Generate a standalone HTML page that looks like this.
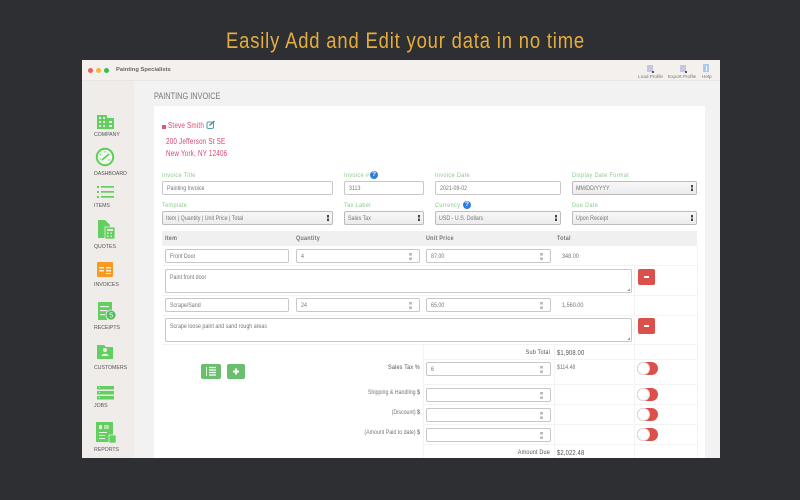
<!DOCTYPE html>
<html><head><meta charset="utf-8">
<style>
html,body{margin:0;padding:0;width:800px;height:500px;overflow:hidden;background:#2d2f33;font-family:"Liberation Sans",sans-serif}
div,span,svg{position:absolute;box-sizing:border-box}
i{font-style:normal;display:inline-block;transform:scaleX(.78);transform-origin:0 50%}
.t{white-space:nowrap;line-height:10px;height:10px}
.nav{font-size:5.2px;color:#555;left:94px;white-space:nowrap;line-height:7px}
.lb{font-size:6.8px;color:#8acb8a;white-space:nowrap;line-height:8px;letter-spacing:.4px;transform:translateY(1px) scaleX(.82);transform-origin:0 50%}
.f{background:#fff;border:1px solid #c9c7c7;border-radius:2px;font-size:6.8px;color:#777;line-height:14px;padding-left:4px;white-space:nowrap;height:14px}
.s{background:linear-gradient(#f8f8f8,#ececec);border:1px solid #bdbbbb;border-radius:2px;font-size:6.8px;color:#777;line-height:14px;padding-left:3px;white-space:nowrap;height:14px}
.s:after{content:"";position:absolute;right:3px;top:3px;width:2px;height:6px;background:linear-gradient(#444 0,#444 40%,transparent 40%,transparent 60%,#444 60%)}
.n:after{content:"";position:absolute;right:7px;top:3px;width:3px;height:7px;background:linear-gradient(#bbb 0,#bbb 35%,transparent 35%,transparent 65%,#bbb 65%)}
.x{font-size:6.8px;color:#777;white-space:nowrap;line-height:8px;transform:translateY(1px) scaleX(.81);transform-origin:0 50%}
.b{color:#555;letter-spacing:.2px}
.r{text-align:right;transform-origin:100% 50%}
.h{font-size:6.8px;font-weight:bold;color:#777;top:234px;line-height:8px;white-space:nowrap;letter-spacing:.3px;transform:translateY(1px) scaleX(.8);transform-origin:0 50%}
.ln{background:#f3f3f3}
.tg{width:21px;height:13px;left:637px;border-radius:7px;background:#dd4f4a}
.tg:after{content:"";position:absolute;left:0;top:0;width:13px;height:13px;border-radius:7px;background:#fff;border:1px solid #ddd;box-sizing:border-box}
.rm{left:638px;width:17px;height:16px;background:#dc504b;border-radius:2px}
.rm:after{content:"";position:absolute;left:6px;top:7px;width:5px;height:2px;background:#fff}
.ta{left:165px;width:467px;height:24px;background:#fff;border:1px solid #c9c7c7;border-radius:2px;font-size:6.8px;color:#777;padding:4px 4px;line-height:8px;white-space:nowrap}
.ta:after{content:"";position:absolute;right:1px;bottom:1px;width:3px;height:3px;background:linear-gradient(135deg,transparent 50%,#999 50%)}
.tl{font-size:7.8px;color:#d9476f;letter-spacing:.22px;transform:scaleX(.81);transform-origin:0 50%}
</style></head><body>

<div class="t" style="left:226px;top:28px;height:26px;line-height:26px;font-size:22px;color:#e5ad3d;letter-spacing:1px;transform:scaleX(.837);transform-origin:0 50%">Easily Add and Edit your data in no time</div>

<div style="left:82px;top:60px;width:638px;height:398px;background:#f2f2f2;overflow:hidden"></div>
<div style="left:82px;top:60px;width:638px;height:21px;background:#f4f0ee;border-bottom:1px solid #e8e5e3"></div>
<div style="left:88px;top:68px;width:5px;height:5px;border-radius:50%;background:#f0605a"></div>
<div style="left:96px;top:68px;width:5px;height:5px;border-radius:50%;background:#f5b53f"></div>
<div style="left:104px;top:68px;width:5px;height:5px;border-radius:50%;background:#35c04a"></div>
<div class="t" style="left:116px;top:65px;font-size:5.8px;font-weight:bold;color:#666">Painting Specialists</div>

<div style="left:647px;top:65px;width:6px;height:7px;background:#c9c4e4"></div>
<div style="left:652px;top:71px;width:2px;height:2px;background:#555"></div>
<div class="t" style="left:638px;top:71.500px;font-size:4.7px;color:#777">Load Profile</div>
<div style="left:680px;top:65px;width:6px;height:7px;background:#c9c4e4"></div>
<div style="left:685px;top:71px;width:2px;height:2px;background:#555"></div>
<div class="t" style="left:668px;top:71.500px;font-size:4.7px;color:#777">Export Profile</div>
<div style="left:703px;top:64px;width:6px;height:8px;background:#a9ccee"></div>
<div style="left:705.500px;top:65.500px;width:1px;height:5px;background:#fff"></div>
<div class="t" style="left:702px;top:71.500px;font-size:4.7px;color:#777">Help</div>

<div style="left:82px;top:81px;width:52px;height:377px;background:#efecea"></div>

<svg style="left:82px;top:100px" width="52" height="358" viewBox="0 0 52 358">
<!-- company -->
<g fill="#62d05f"><rect x="15" y="15" width="10" height="14"/><rect x="25" y="18" width="7" height="11"/></g>
<g fill="#efecea"><rect x="17" y="17" width="2" height="2"/><rect x="21" y="17" width="2" height="2"/><rect x="17" y="21" width="2" height="2"/><rect x="21" y="21" width="2" height="2"/><rect x="17" y="25" width="2" height="2"/><rect x="21" y="25" width="2" height="2"/><rect x="27" y="21" width="3" height="2"/><rect x="27" y="25" width="3" height="2"/></g>
<!-- dashboard -->
<circle cx="23" cy="57" r="8.200" fill="#f4f7ef" stroke="#5ccf58" stroke-width="2"/>
<path d="M20 60L27 54" stroke="#5ccf58" stroke-width="1.600"/>
<path d="M18 54l1 1M23 51v1.500M28 60h-1.500M18 59h1" stroke="#5ccf58" stroke-width="1"/>
<!-- items -->
<g fill="#62d05f"><rect x="19" y="86" width="13" height="1.700"/><rect x="19" y="91" width="13" height="1.700"/><rect x="19" y="96" width="13" height="1.700"/><rect x="15" y="86" width="2" height="2"/><rect x="15" y="91" width="2" height="2"/><rect x="15" y="96" width="2" height="2"/></g>
<!-- quotes -->
<path d="M16 120h7l5 5v3h-3v10h-9z" fill="#62d05f"/>
<rect x="23" y="127" width="10" height="12" fill="#62d05f" stroke="#efecea" stroke-width=".8"/>
<g fill="#efecea"><rect x="25" y="129" width="6" height="2"/><rect x="25" y="132.500" width="1.500" height="1.500"/><rect x="28.500" y="132.500" width="1.500" height="1.500"/><rect x="25" y="135.500" width="1.500" height="1.500"/><rect x="28.500" y="135.500" width="1.500" height="1.500"/></g>
<!-- invoices -->
<rect x="15" y="162" width="16" height="15" rx="1" fill="#f79a24"/>
<g fill="#fdeccf"><rect x="17" y="167" width="5" height="1.500"/><rect x="24" y="167" width="5" height="1.500"/><rect x="17" y="170" width="5" height="1.500"/><rect x="24" y="170" width="5" height="1.500"/><rect x="24" y="173" width="5" height="1"/></g>
<!-- receipts -->
<path d="M16 202h14v13h-5v5h-9z" fill="#62d05f"/>
<g fill="#efecea"><rect x="18" y="206" width="9" height="1.200"/><rect x="18" y="210" width="7" height="1.200"/><rect x="18" y="214" width="5" height="1.200"/></g>
<circle cx="29" cy="215" r="5" fill="#4fbf5a" stroke="#efecea" stroke-width=".8"/>
<text x="27.300" y="217.500" font-size="7" fill="#fff" font-family="Liberation Sans">5</text>
<!-- customers -->
<path d="M15 245h7l2 2h7v12H15z" fill="#62d05f"/>
<circle cx="23" cy="250" r="2" fill="#efecea"/>
<path d="M19.500 256c0-3 7-3 7 0z" fill="#efecea"/>
<!-- jobs -->
<g fill="#62d05f"><rect x="15" y="286" width="17" height="3.500"/><rect x="15" y="291" width="17" height="3.500"/><rect x="15" y="296" width="17" height="3.500"/></g>
<g fill="#efecea"><rect x="17" y="287" width="1" height="1"/><rect x="17" y="292" width="1" height="1"/><rect x="17" y="297" width="1" height="1"/></g>
<!-- reports -->
<rect x="14" y="322" width="17" height="20" fill="#62d05f"/>
<rect x="27" y="335" width="7" height="8" fill="#62d05f" stroke="#efecea" stroke-width=".7"/>
<g fill="#efecea"><rect x="17" y="325" width="3" height="4"/><rect x="22" y="325" width="5" height="4" opacity=".6"/><rect x="17" y="332" width="8" height="1"/><rect x="17" y="335" width="6" height="1"/><rect x="17" y="338" width="6" height="1"/></g>
</svg>

<div class="nav" style="top:132px">COMPANY</div>
<div class="nav" style="top:171px">DASHBOARD</div>
<div class="nav" style="top:203px">ITEMS</div>
<div class="nav" style="top:244px">QUOTES</div>
<div class="nav" style="top:282px">INVOICES</div>
<div class="nav" style="top:325px">RECEIPTS</div>
<div class="nav" style="top:365px">CUSTOMERS</div>
<div class="nav" style="top:403px">JOBS</div>
<div class="nav" style="top:447px">REPORTS</div>

<div class="t" style="left:154px;top:91px;font-size:9.200px;color:#777;transform:scaleX(.8);transform-origin:0 50%">PAINTING INVOICE</div>

<div style="left:154px;top:106px;width:551px;height:352px;background:#fff"></div>

<div style="left:162px;top:125px;width:4px;height:4px;background:#e0557a"></div>
<div class="t tl" style="left:168px;top:121px">Steve Smith</div>
<svg style="left:206px;top:120px" width="10" height="10" viewBox="0 0 10 10"><rect x="1" y="2" width="6.500" height="6.500" rx="1.500" fill="none" stroke="#5d9fa6" stroke-width="1.100"/><path d="M3.500 5.500L8.500 1" stroke="#3f8e98" stroke-width="1.300"/></svg>
<div class="t tl" style="left:166px;top:137px">200 Jefferson St SE</div>
<div class="t tl" style="left:166px;top:149px">New York, NY 12406</div>

<div class="lb" style="left:162px;top:171px">Invoice Title</div>
<div class="f" style="left:162px;top:181px;width:171px"><i>Painting Invoice</i></div>
<div class="lb" style="left:344px;top:171px">Invoice #</div>
<div style="left:370px;top:171px;width:8px;height:8px;border-radius:50%;background:#2a7de1;color:#fff;font-size:6.500px;font-weight:bold;line-height:8px;text-align:center">?</div>
<div class="f" style="left:344px;top:181px;width:80px"><i>3113</i></div>
<div class="lb" style="left:435px;top:171px">Invoice Date</div>
<div class="f" style="left:435px;top:181px;width:126px"><i>2021-09-02</i></div>
<div class="lb" style="left:572px;top:171px">Display Date Format</div>
<div class="s" style="left:572px;top:181px;width:125px"><i>MM/DD/YYYY</i></div>

<div class="lb" style="left:162px;top:201px">Template</div>
<div class="s" style="left:162px;top:211px;width:171px"><i>Item | Quantity | Unit Price | Total</i></div>
<div class="lb" style="left:344px;top:201px">Tax Label</div>
<div class="s" style="left:344px;top:211px;width:80px"><i>Sales Tax</i></div>
<div class="lb" style="left:435px;top:201px">Currency</div>
<div style="left:463px;top:201px;width:8px;height:8px;border-radius:50%;background:#2a7de1;color:#fff;font-size:6.500px;font-weight:bold;line-height:8px;text-align:center">?</div>
<div class="s" style="left:435px;top:211px;width:126px"><i>USD - U.S. Dollars</i></div>
<div class="lb" style="left:572px;top:201px">Due Date</div>
<div class="s" style="left:572px;top:211px;width:125px"><i>Upon Receipt</i></div>

<div style="left:162px;top:231px;width:535px;height:15px;background:#f0f0f0"></div>
<div class="h" style="left:165px">Item</div>
<div class="h" style="left:296px">Quantity</div>
<div class="h" style="left:426px">Unit Price</div>
<div class="h" style="left:557px">Total</div>

<div class="ln" style="left:162px;top:295px;width:535px;height:1px"></div>
<div class="ln" style="left:162px;top:344px;width:535px;height:1px"></div>
<div class="ln" style="left:162px;top:265px;width:535px;height:1px"></div>
<div class="ln" style="left:162px;top:315px;width:535px;height:1px"></div>
<div class="ln" style="left:423px;top:359px;width:274px;height:1px"></div>
<div class="ln" style="left:423px;top:384px;width:274px;height:1px"></div>
<div class="ln" style="left:423px;top:404px;width:274px;height:1px"></div>
<div class="ln" style="left:423px;top:424px;width:274px;height:1px"></div>
<div class="ln" style="left:423px;top:444px;width:274px;height:1px"></div>
<div class="ln" style="left:423px;top:344px;width:1px;height:114px"></div>
<div class="ln" style="left:554px;top:344px;width:1px;height:114px"></div>
<div class="ln" style="left:634px;top:266px;width:1px;height:192px"></div>
<div class="ln" style="left:697px;top:246px;width:1px;height:212px"></div>

<div class="f" style="left:165px;top:249px;width:124px"><i>Front Door</i></div>
<div class="f n" style="left:296px;top:249px;width:124px"><i>4</i></div>
<div class="f n" style="left:426px;top:249px;width:125px"><i>87.00</i></div>
<div class="x" style="left:562px;top:252px">348.00</div>
<div class="ta" style="top:269px"><i>Paint front door</i></div>
<div class="rm" style="top:269px"></div>

<div class="f" style="left:165px;top:298px;width:124px"><i>Scrape/Sand</i></div>
<div class="f n" style="left:296px;top:298px;width:124px"><i>24</i></div>
<div class="f n" style="left:426px;top:298px;width:125px"><i>65.00</i></div>
<div class="x" style="left:562px;top:301px">1,560.00</div>
<div class="ta" style="top:318px"><i>Scrape loose paint and sand rough areas</i></div>
<div class="rm" style="top:318px"></div>

<div style="left:201px;top:364px;width:20px;height:15px;background:#69bf6e;border-radius:2px"></div>
<svg style="left:201px;top:364px" width="20" height="15" viewBox="0 0 20 15"><path d="M8 3.500h7M8 6h7M8 8.500h7M8 11h7" stroke="#fff" stroke-width="1.300"/><path d="M5.500 3v9" stroke="#d5f0d5" stroke-width="1"/></svg>
<div style="left:227px;top:364px;width:18px;height:15px;background:#69bf6e;border-radius:2px"></div>
<svg style="left:227px;top:364px" width="18" height="15" viewBox="0 0 18 15"><path d="M9 4.500v6M6 7.500h6" stroke="#fff" stroke-width="2"/></svg>

<div class="x b r" style="left:450px;width:100px;top:348px">Sub Total</div>
<div class="x b" style="left:557px;top:348px;font-size:7.200px">$1,908.00</div>

<div class="x b r" style="left:320px;width:100px;top:363px">Sales Tax %</div>
<div class="f n" style="left:426px;top:362px;width:125px"><i>6</i></div>
<div class="x" style="left:557px;top:363px;font-size:6.400px">$114.48</div>
<div class="tg" style="top:362px"></div>

<div class="x r" style="left:300px;width:120px;top:388px;font-size:6.500px">Shipping &amp; Handling <b>$</b></div>
<div class="f n" style="left:426px;top:388px;width:125px"></div>
<div class="tg" style="top:388px"></div>

<div class="x r" style="left:300px;width:120px;top:408px;font-size:6.500px">(Discount) <b>$</b></div>
<div class="f n" style="left:426px;top:408px;width:125px"></div>
<div class="tg" style="top:408px"></div>

<div class="x r" style="left:300px;width:120px;top:428px;font-size:6.500px">(Amount Paid to date) <b>$</b></div>
<div class="f n" style="left:426px;top:428px;width:125px"></div>
<div class="tg" style="top:428px"></div>

<div class="x b r" style="left:450px;width:100px;top:448px">Amount Due</div>
<div class="x b" style="left:557px;top:448px;font-size:7.200px">$2,022.48</div>

<div style="left:0;top:458px;width:800px;height:42px;background:#2d2f33"></div>
<div style="left:0;top:0;width:800px;height:60px;background:#2d2f33;z-index:-1"></div>
</body></html>
